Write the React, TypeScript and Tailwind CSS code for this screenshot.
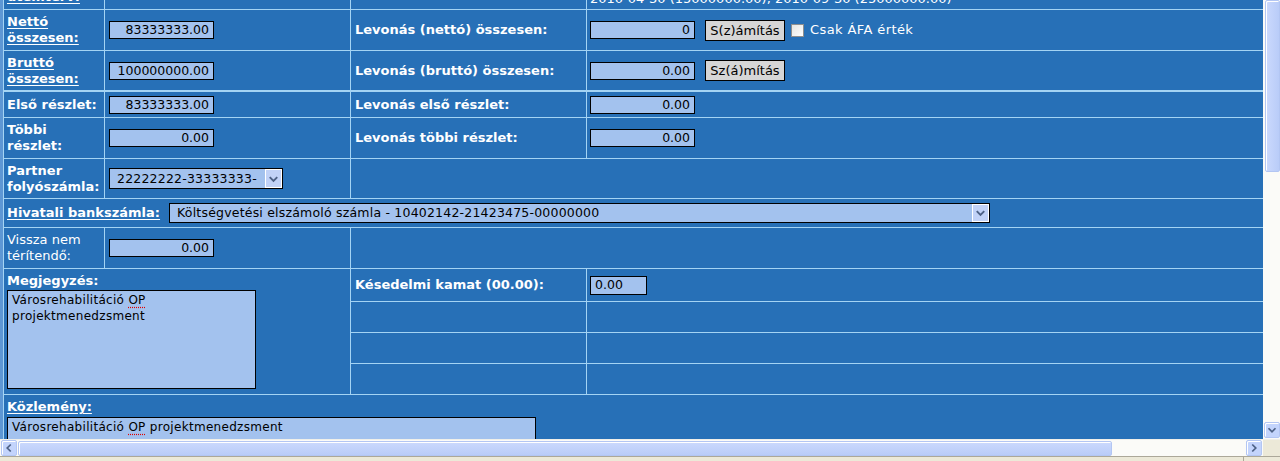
const CELL = "bg-[#2770b7] flex items-center";
const BOLD = "text-white font-bold";
const LINE = "border-b border-[#a4d4f4]";

function Field({ value, w = "w-[105px]", left }: { value: string; w?: string; left?: boolean }) {
  return (
    <div
      className={`${w} h-[18px] border border-black bg-[#a3c2ee] text-black text-[12.5px] leading-[16px] ${left ? "text-left pl-1" : "text-right pr-1"}`}
    >
      {value}
    </div>
  );
}

function Chevron({ dir = "down", color = "#4d6185" }: { dir?: "down" | "left" | "right"; color?: string }) {
  const d = dir === "down" ? "M4 6 L8 10 L12 6" : dir === "left" ? "M10 4 L6 8 L10 12" : "M6 4 L10 8 L6 12";
  return (
    <svg width="16" height="16" viewBox="0 0 16 16">
      <path d={d} fill="none" stroke={color} strokeWidth="2" />
    </svg>
  );
}

function Select({ value, w }: { value: string; w: string }) {
  return (
    <div className={`${w} h-[21px] border border-black bg-[#a3c2ee] text-black text-[12.5px] flex items-center`}>
      <span className="flex-1 pl-[7px] tracking-[0.2px] whitespace-nowrap overflow-hidden">{value}</span>
      <div className="w-[17px] h-full border border-white bg-[#c1d2f7] flex items-center justify-center">
        <Chevron />
      </div>
    </div>
  );
}

function Btn({ children }: { children: string }) {
  return (
    <button className="ml-[10px] w-[80px] h-[21px] border border-black bg-[#d6d6d6] text-black leading-[19px]">
      {children}
    </button>
  );
}

function ArrowBtn({ dir }: { dir: "down" | "left" | "right" }) {
  return (
    <div className="w-[16px] h-[16px] rounded-[2px] border border-[#b3c6f3] bg-[#c3d4fc] flex items-center justify-center shadow-[inset_1px_1px_0_#fff]">
      <Chevron dir={dir} />
    </div>
  );
}

function Spell({ children }: { children: string }) {
  return <span className="underline decoration-dotted decoration-[#e00000] underline-offset-[3px]">{children}</span>;
}

export default function App() {
  return (
    <div className="w-[1280px] h-[461px] overflow-hidden bg-[#ece9d8] font-['DejaVu_Sans',sans-serif] text-[13px]">
      <div className="flex h-[439px]">
        <div className="w-[1263px] h-full overflow-hidden bg-[#5d97d4] pl-[3px]">
          <div className="-mt-[31px] grid grid-cols-[100px_245px_235px_676px] grid-rows-[40px_40px_40px_25px_40px_39px_28px_40px_32px_30px_30px_30px_80px] gap-px pl-px bg-[#a4d4f4] leading-[16px]">
            {/* ütemterv (scrolled off) */}
            <div className={`${CELL} pl-[3px]`}>
              <span className={`${BOLD} underline underline-offset-[2px]`}>Kifizetési ütemterv:</span>
            </div>
            <div className={CELL} />
            <div className={CELL} />
            <div className="bg-[#2770b7] flex items-end pl-[3px] pb-[2px] text-white whitespace-nowrap">
              2010-04-30 (15000000.00), 2010-09-30 (25000000.00)
            </div>

            {/* Nettó */}
            <div className={`${CELL} pl-[3px]`}>
              <span className={`${BOLD} underline underline-offset-[2px]`}>Nettó összesen:</span>
            </div>
            <div className={`${CELL} pl-1`}>
              <Field value="83333333.00" />
            </div>
            <div className={`${CELL} pl-1 ${BOLD}`}>Levonás (nettó) összesen:</div>
            <div className={`${CELL} pl-[3px]`}>
              <Field value="0" />
              <Btn>S(z)ámítás</Btn>
              <div className="ml-[6px] w-[13px] h-[13px] border border-[#8e8f8f] bg-gradient-to-br from-[#e6e6e2] to-white" />
              <span className="ml-[6px] text-white tracking-[0.4px]">Csak ÁFA érték</span>
            </div>

            {/* Bruttó */}
            <div className={`${CELL} ${LINE} pl-[3px]`}>
              <span className={`${BOLD} underline underline-offset-[2px]`}>Bruttó összesen:</span>
            </div>
            <div className={`${CELL} ${LINE} pl-1`}>
              <Field value="100000000.00" />
            </div>
            <div className={`${CELL} ${LINE} pl-1 ${BOLD}`}>Levonás (bruttó) összesen:</div>
            <div className={`${CELL} ${LINE} pl-[3px]`}>
              <Field value="0.00" />
              <Btn>Sz(á)mítás</Btn>
            </div>

            {/* Első részlet */}
            <div className={`${CELL} pl-[3px] ${BOLD}`}>Első részlet:</div>
            <div className={`${CELL} pl-1`}>
              <Field value="83333333.00" />
            </div>
            <div className={`${CELL} pl-1 ${BOLD}`}>Levonás első részlet:</div>
            <div className={`${CELL} pl-[3px]`}>
              <Field value="0.00" />
            </div>

            {/* Többi részlet */}
            <div className={`${CELL} pl-[3px] ${BOLD}`}>Többi részlet:</div>
            <div className={`${CELL} pl-1`}>
              <Field value="0.00" />
            </div>
            <div className={`${CELL} pl-1 ${BOLD}`}>Levonás többi részlet:</div>
            <div className={`${CELL} pl-[3px]`}>
              <Field value="0.00" />
            </div>

            {/* Partner folyószámla */}
            <div className={`${CELL} pl-[3px] ${BOLD}`}>Partner folyószámla:</div>
            <div className={`${CELL} pl-1`}>
              <Select value="22222222-33333333-" w="w-[174px]" />
            </div>
            <div className={`${CELL} col-span-2`} />

            {/* Hivatali bankszámla */}
            <div className={`${CELL} col-span-4 pl-[3px]`}>
              <span className={`${BOLD} underline underline-offset-[2px]`}>Hivatali bankszámla:</span>
              <div className="ml-[9px]">
                <Select value="Költségvetési elszámoló számla - 10402142-21423475-00000000" w="w-[821px] !h-[20px]" />
              </div>
            </div>

            {/* Vissza nem térítendő */}
            <div className={`${CELL} pl-[3px] text-white`}>Vissza nem térítendő:</div>
            <div className={`${CELL} pl-1`}>
              <Field value="0.00" />
            </div>
            <div className={`${CELL} col-span-2`} />

            {/* Megjegyzés */}
            <div className="bg-[#2770b7] col-span-2 row-span-4 pl-[3px] pt-1 flex flex-col">
              <span className={BOLD}>Megjegyzés:</span>
              <div className="mt-px w-[249px] h-[99px] border border-black bg-[#a3c2ee] text-black text-[12px] pl-1 pt-px tracking-[0.3px]">
                Városrehabilitáció <Spell>OP</Spell>
                <br />
                projektmenedzsment
              </div>
            </div>
            <div className={`${CELL} pl-1 ${BOLD}`}>Késedelmi kamat (00.00):</div>
            <div className={`${CELL} pl-[3px]`}>
              <Field value="0.00" w="w-[57px] !h-[19px]" left />
            </div>
            <div className={CELL} />
            <div className={CELL} />
            <div className={CELL} />
            <div className={CELL} />
            <div className={CELL} />
            <div className={CELL} />

            {/* Közlemény */}
            <div className="bg-[#2770b7] col-span-4 pl-[3px] pt-1 flex flex-col">
              <span className={`${BOLD} underline underline-offset-[2px]`}>Közlemény:</span>
              <div className="mt-[2px] w-[529px] h-[60px] border border-black bg-[#a3c2ee] text-black text-[12px] pl-1 pt-px tracking-[0.3px]">
                Városrehabilitáció <Spell>OP</Spell> projektmenedzsment
              </div>
            </div>
          </div>
        </div>

        {/* vertical scrollbar */}
        <div className="w-[17px] h-full bg-[#fbfbf8] flex flex-col items-center pl-px">
          <div className="w-[15px] h-[172px] rounded-[2px] border border-[#b3c6f3] bg-gradient-to-r from-[#cbd9fd] to-[#b9ccf8] shadow-[inset_1px_1px_0_#fff]" />
          <div className="flex-1" />
          <ArrowBtn dir="down" />
          <div className="h-px" />
        </div>
      </div>

      {/* horizontal scrollbar */}
      <div className="h-[17px] flex items-center bg-[#fbfbf8] border-t border-[#f0efe9]">
        <div className="pl-px">
          <ArrowBtn dir="left" />
        </div>
        <div className="ml-px w-[1094px] h-[15px] rounded-[2px] border border-[#b3c6f3] bg-gradient-to-b from-[#cbd9fd] to-[#b9ccf8] shadow-[inset_1px_1px_0_#fff]" />
        <div className="flex-1" />
        <ArrowBtn dir="right" />
        <div className="ml-px w-[17px] h-full bg-[#ece9d8]" />
      </div>

      {/* status bar edge */}
      <div className="h-[5px] border-t border-[#aca899] bg-[#ece9d8] flex">
        <div className="ml-[1243px] w-px h-full bg-[#aca899]" />
      </div>
    </div>
  );
}
